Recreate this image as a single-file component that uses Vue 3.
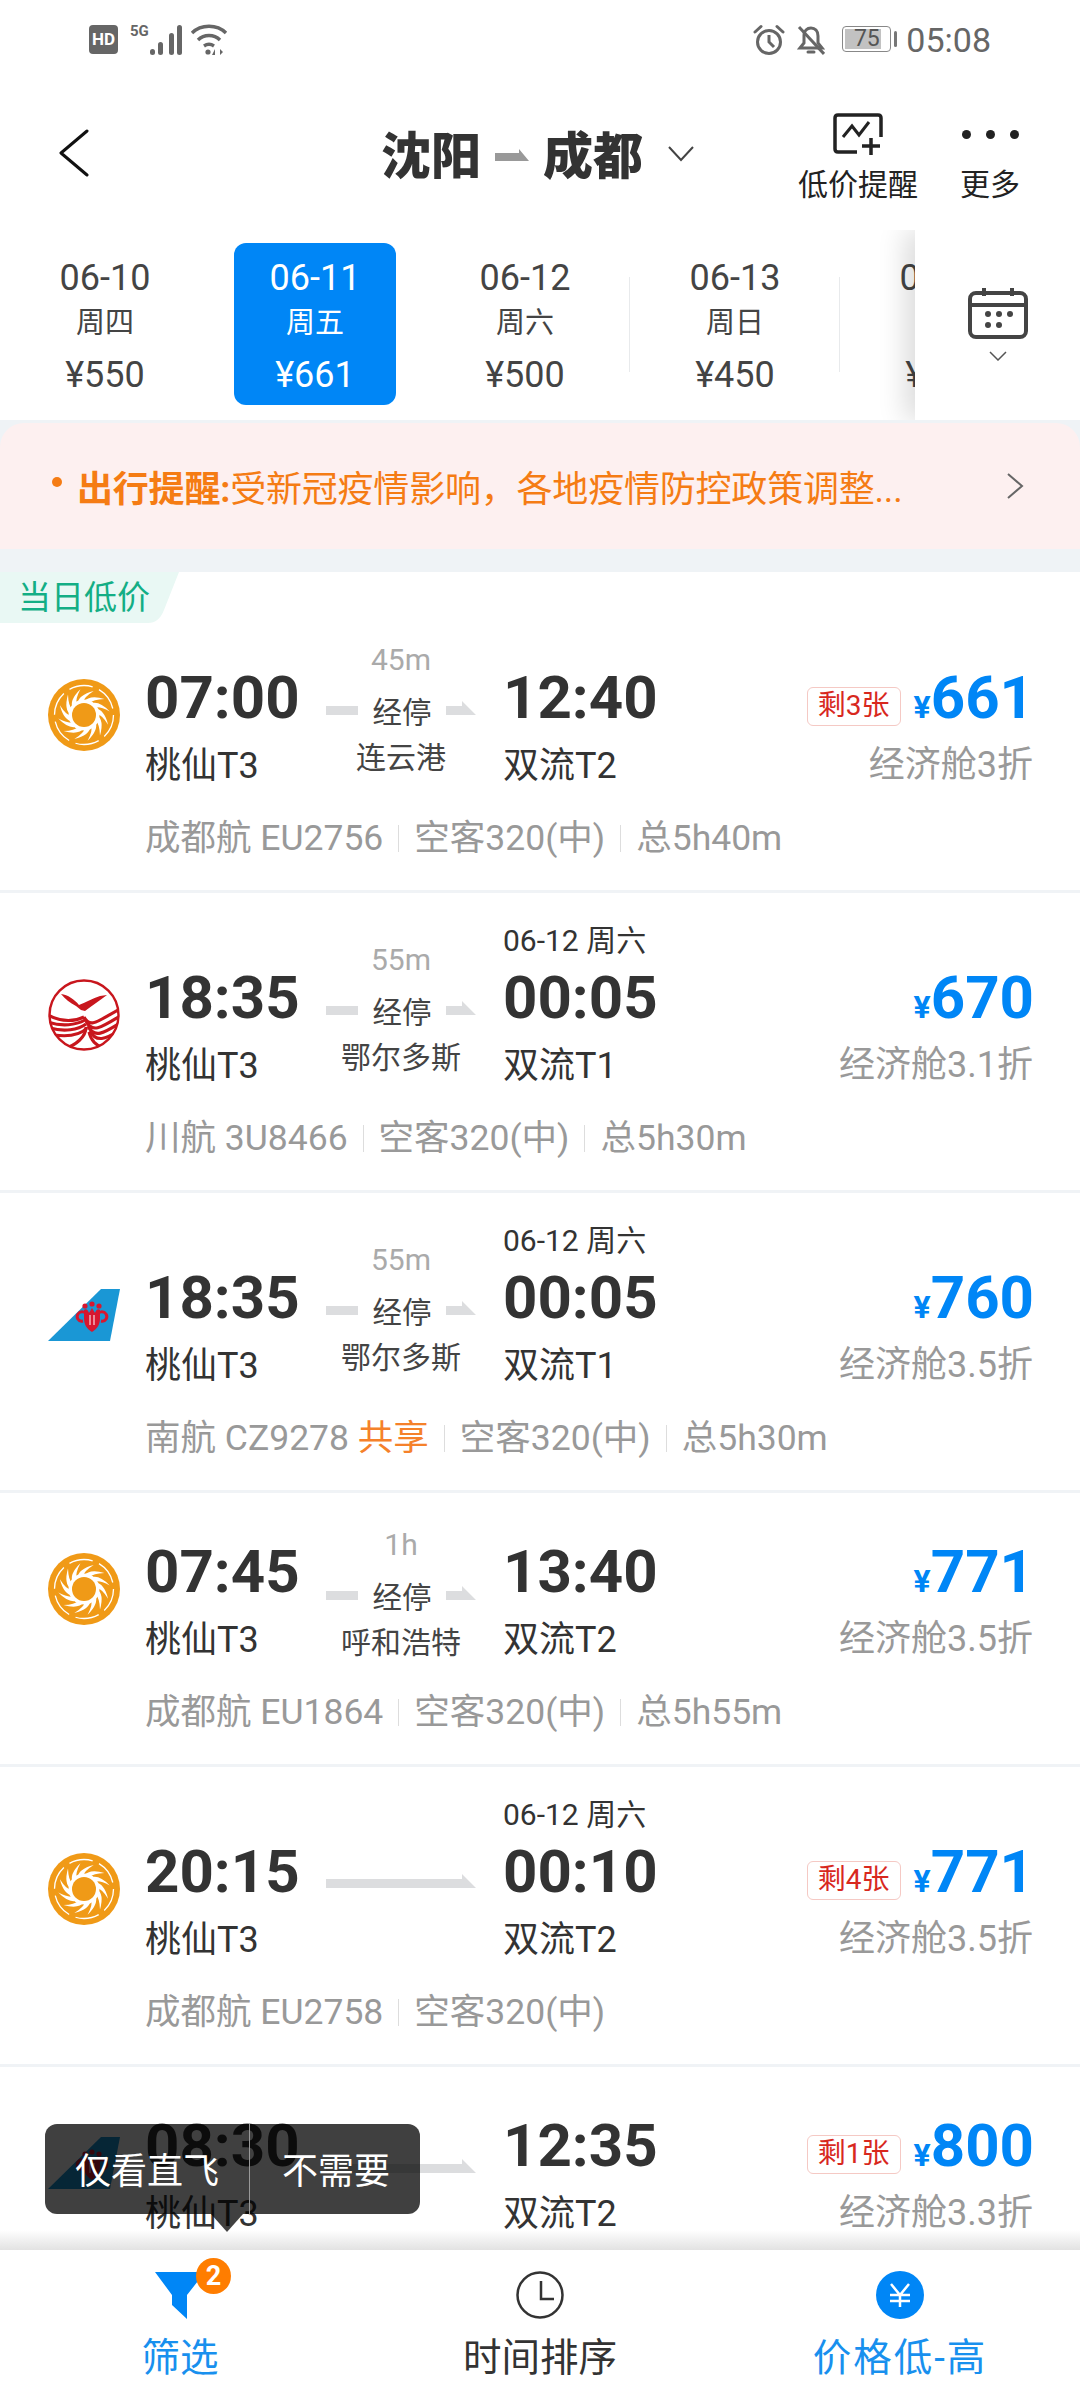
<template>
  <div class="page">
    <div class="status">
      <span class="hd">HD</span>
      <span class="five-g">5G</span>
      <svg class="signal" width="34" height="32" viewBox="0 0 34 32" fill="#666">
        <rect x="1" y="25" width="5" height="6" rx="2.5" />
        <rect x="9" y="18" width="5" height="13" rx="2.5" />
        <rect x="20" y="9" width="5" height="22" rx="2.5" />
        <rect x="28" y="1" width="5" height="30" rx="2.5" />
      </svg>
      <svg class="wifi" width="38" height="32" viewBox="0 0 38 32" fill="none" stroke="#666" stroke-width="3.4">
        <path d="M2 9C11 0 27 0 36 9" />
        <path d="M8 16C14 10 24 10 30 16" />
        <path d="M14 22C17 20 21 20 24 22" />
        <circle cx="18" cy="28" r="2.6" fill="#666" stroke="none" />
        <path d="M25 31V25L22 31ZM30 31V25L33 28Z" fill="#666" stroke="none" />
      </svg>
      <div class="status-right">
        <svg width="32" height="32" viewBox="0 0 32 32" fill="none" stroke="#666" stroke-width="3">
          <circle cx="16" cy="18" r="11.5" />
          <path d="M16 11V18L21 23" />
          <path d="M2 8L8 2.500M30 8L24 2.500" stroke-linecap="round" />
        </svg>
        <svg class="bell" width="28" height="32" viewBox="0 0 28 32" fill="none" stroke="#666" stroke-width="3">
          <path d="M7 11C7 7 10 4 14 4C18 4 21 7 21 12V19L25 24H3L7 19Z" />
          <path d="M11 28H17" stroke-linecap="round" />
          <path d="M2 3L27 30" />
        </svg>
        <div class="battery">
          <span class="battery-box"><i class="battery-fill"></i><b>75</b></span>
          <i class="battery-nub"></i>
        </div>
        <span class="clock">05:08</span>
      </div>
    </div>

    <header class="header">
      <svg class="back" width="32" height="48" viewBox="0 0 32 48" fill="none" stroke="#111" stroke-width="3">
        <path d="M29 2L3 24L29 46" stroke-linecap="round" stroke-linejoin="round" />
      </svg>
      <div class="route">
        <span>沈阳</span>
        <svg class="route-arrow" width="34" height="12" viewBox="0 0 34 12" fill="#999">
          <path d="M0 4H24V0L34 12H0Z" />
        </svg>
        <span>成都</span>
        <svg class="route-down" width="28" height="17" viewBox="0 0 28 17" fill="none" stroke="#444" stroke-width="2">
          <path d="M2 2L14 15L26 2" />
        </svg>
      </div>
      <div class="actions">
        <div class="action">
          <svg width="50" height="42" viewBox="0 0 50 42" fill="none" stroke="#222" stroke-width="3.5">
            <path d="M24 39H5C3 39 2 38 2 36V5C2 3 3 2 5 2H45C47 2 48 3 48 5V24" />
            <path d="M10 24L19 13L26 22L36 9" stroke-width="3" />
            <path d="M38 25V42M29 33H47" />
          </svg>
          <span>低价提醒</span>
        </div>
        <div class="action">
          <div class="dots"><i></i><i></i><i></i></div>
          <span>更多</span>
        </div>
      </div>
    </header>

    <div class="dates">
      <div class="date-list">
        <div v-for="d in dates" :key="d.day" class="date-item" :class="{ sep: d.sep }">
          <div class="date-pill" :class="{ active: d.active }">
            <span class="date-day">{{ d.day }}</span>
            <span class="date-week">{{ d.week }}</span>
            <span class="date-price">{{ d.price }}</span>
          </div>
        </div>
      </div>
      <div class="calendar">
        <svg width="60" height="52" viewBox="0 0 60 52" fill="none" stroke="#444" stroke-width="4">
          <rect x="2" y="6" width="56" height="44" rx="6" />
          <path d="M2 18H58" />
          <path d="M16 1V9M44 1V9" />
          <g fill="#444" stroke="none">
            <circle cx="20" cy="27" r="3" /><circle cx="31" cy="27" r="3" /><circle cx="42" cy="27" r="3" />
            <circle cx="20" cy="38" r="3" /><circle cx="31" cy="38" r="3" />
          </g>
        </svg>
        <svg class="calendar-down" width="18" height="10" viewBox="0 0 18 10" fill="none" stroke="#555" stroke-width="1.500">
          <path d="M1 1L9 9L17 1" />
        </svg>
      </div>
    </div>

    <div class="notice-wrap">
      <div class="notice">
        <i class="notice-dot"></i>
        <p class="notice-text"><b>出行提醒:</b>受新冠疫情影响，各地疫情防控政策调整...</p>
        <svg width="18" height="26" viewBox="0 0 18 26" fill="none" stroke="#666" stroke-width="2">
          <path d="M2 1L16 13L2 25" />
        </svg>
      </div>
    </div>

    <div class="list">
      <div v-for="f in flights" :key="f.no" class="flight" :class="{ plain: f.plain }">
        <div v-if="f.lowest" class="lowest">当日低价</div>
        <div v-if="f.nextDay" class="next-day">{{ f.nextDay }}</div>
        <div class="main">
          <div class="logo">
            <svg v-if="f.logo === 'sun'" width="72" height="72" viewBox="0 0 72 72">
              <circle cx="36" cy="36" r="36" fill="#f09a17" />
              <circle cx="36" cy="36" r="29.500" fill="none" stroke="#fff" stroke-width="1.300" stroke-dasharray="24 6.900" />
              <circle cx="36" cy="36" r="15.500" fill="#fff" />
              <path v-for="(b, i) in blades" :key="i" :d="b" fill="#fff" />
              <circle cx="36" cy="36" r="12" fill="#f09a17" />
            </svg>
            <svg v-else-if="f.logo === 'bird'" width="72" height="72" viewBox="0 0 72 72">
              <defs>
                <clipPath id="bird-clip"><circle cx="36" cy="36" r="35" /></clipPath>
              </defs>
              <circle cx="36" cy="36" r="34.500" fill="#fff" stroke="#c8161d" stroke-width="2.400" />
              <path d="M13 15C20 16 26 20 31 26C37 24 45 19 52 17L59 16C52 21 44 27 37 32L33 31L28 27C22 24 17 20 13 15Z" fill="#c8161d" />
              <g clip-path="url(#bird-clip)" fill="none" stroke="#c8161d" stroke-width="3.100">
                <path d="M36 38C28 42 14 44 0 36" />
                <path d="M37 41C28 46 14 48 0 43" />
                <path d="M38 45C30 51 16 53 2 49" />
                <path d="M39 49C32 56 20 58 6 56" />
                <path d="M36 38C42 50 50 42 72 30" />
                <path d="M38 42C44 55 54 48 72 37" />
                <path d="M40 47C46 60 56 54 72 44" />
                <path d="M42 52C48 64 58 60 70 52" />
                <path d="M38 48C38 58 28 66 16 70" />
                <path d="M41 53C43 62 48 66 56 70" />
              </g>
            </svg>
            <svg v-else width="72" height="72" viewBox="0 0 72 72">
              <path d="M53 10H72L62 62H0Z" fill="#1a97d5" />
              <g fill="#d7172f">
                <circle cx="37" cy="27" r="2.600" /><circle cx="44" cy="25" r="2.600" /><circle cx="51" cy="27" r="2.600" />
                <path d="M36 31C38 29 40 31 41 34L44 29L47 34C48 31 50 29 52 31V39C52 46 49 50 44 53C39 50 36 46 36 39Z" />
              </g>
              <g fill="none" stroke="#d7172f" stroke-width="3">
                <path d="M35 42C30 43 28 38 30 35C32 32 37 32 41 36" />
                <path d="M53 42C58 43 60 38 58 35C56 32 51 32 47 36" />
              </g>
              <path d="M42 36V46M46 36V46" stroke="#fff" stroke-width="1" />
            </svg>
          </div>
          <div class="side">
            <div class="time">{{ f.dep }}</div>
            <div class="terminal">{{ f.from }}</div>
          </div>
          <div class="mid">
            <template v-if="f.stop">
              <div class="duration">{{ f.wait }}</div>
              <div class="stop-line">
                <i class="bar"></i>
                <span>经停</span>
                <svg width="30" height="14" viewBox="0 0 30 14" fill="#dcdddf"><path d="M0 5H16V0L30 14H0Z" /></svg>
              </div>
              <div class="city">{{ f.stop }}</div>
            </template>
            <svg v-else class="direct" width="150" height="14" viewBox="0 0 150 14" fill="#dcdddf">
              <path d="M0 5H136V0L150 14H0Z" />
            </svg>
          </div>
          <div class="side arrive">
            <div class="time">{{ f.arr }}</div>
            <div class="terminal">{{ f.to }}</div>
          </div>
          <div class="fare">
            <div class="price-line">
              <span v-if="f.left" class="left-tag">{{ f.left }}</span>
              <span class="price"><small>¥</small>{{ f.price }}</span>
            </div>
            <div class="cabin">{{ f.cabin }}</div>
          </div>
        </div>
        <div class="sub">
          <span>{{ f.no }}<em v-if="f.shared"> 共享</em></span>
          <i></i>
          <span>空客320(中)</span>
          <template v-if="f.total">
            <i></i>
            <span>{{ f.total }}</span>
          </template>
        </div>
      </div>
    </div>

    <div class="toast">
      <span class="toast-yes">仅看直飞</span>
      <span class="toast-no">不需要</span>
    </div>

    <nav class="tabs">
      <div class="tab blue">
        <div class="tab-icon">
          <svg width="50" height="48" viewBox="0 0 50 48" fill="#0086f6">
            <path d="M0 1H50L32 24V48L17 34V24Z" />
          </svg>
          <span class="badge">2</span>
        </div>
        <span>筛选</span>
      </div>
      <div class="tab">
        <div class="tab-icon">
          <svg width="48" height="48" viewBox="0 0 48 48" fill="none" stroke="#333" stroke-width="2.500">
            <circle cx="24" cy="24" r="22.500" />
            <path d="M25 10V28H38" />
          </svg>
        </div>
        <span>时间排序</span>
      </div>
      <div class="tab blue wide">
        <div class="tab-icon">
          <svg width="48" height="48" viewBox="0 0 48 48" fill="none">
            <circle cx="24" cy="24" r="24" fill="#0086f6" />
            <path d="M15 13L24 24L33 13M14 24H34M14 30H34M24 24V36" stroke="#fff" stroke-width="2.500" />
          </svg>
        </div>
        <span>价格低-高</span>
      </div>
    </nav>
  </div>
</template>

<script setup>
const dates = [
  { day: '06-10', week: '周四', price: '¥550' },
  { day: '06-11', week: '周五', price: '¥661', active: true },
  { day: '06-12', week: '周六', price: '¥500', sep: true },
  { day: '06-13', week: '周日', price: '¥450', sep: true },
  { day: '06-14', week: '周一', price: '¥500' }
]

const flights = [
  { logo: 'sun', lowest: true, dep: '07:00', from: '桃仙T3', arr: '12:40', to: '双流T2', wait: '45m', stop: '连云港', left: '剩3张', price: 661, cabin: '经济舱3折', no: '成都航 EU2756', total: '总5h40m' },
  { logo: 'bird', nextDay: '06-12 周六', dep: '18:35', from: '桃仙T3', arr: '00:05', to: '双流T1', wait: '55m', stop: '鄂尔多斯', price: 670, cabin: '经济舱3.1折', no: '川航 3U8466', total: '总5h30m' },
  { logo: 'tail', nextDay: '06-12 周六', dep: '18:35', from: '桃仙T3', arr: '00:05', to: '双流T1', wait: '55m', stop: '鄂尔多斯', price: 760, cabin: '经济舱3.5折', no: '南航 CZ9278', shared: true, total: '总5h30m' },
  { logo: 'sun', plain: true, dep: '07:45', from: '桃仙T3', arr: '13:40', to: '双流T2', wait: '1h', stop: '呼和浩特', price: 771, cabin: '经济舱3.5折', no: '成都航 EU1864', total: '总5h55m' },
  { logo: 'sun', nextDay: '06-12 周六', dep: '20:15', from: '桃仙T3', arr: '00:10', to: '双流T2', left: '剩4张', price: 771, cabin: '经济舱3.5折', no: '成都航 EU2758' },
  { logo: 'tail', plain: true, dep: '08:30', from: '桃仙T3', arr: '12:35', to: '双流T2', left: '剩1张', price: 800, cabin: '经济舱3.3折', no: '南航 CZ6000' }
]

// swirl of the sun logo, twelve curved blades round the centre
const polar = (r, deg) => {
  const a = (deg * Math.PI) / 180
  return `${(36 + r * Math.cos(a)).toFixed(1)} ${(36 + r * Math.sin(a)).toFixed(1)}`
}
const blades = Array.from({ length: 12 }, (_, i) => {
  const a = i * 30
  return `M${polar(13, a)}Q${polar(21, a + 14)} ${polar(26, a + 52)}Q${polar(18, a + 30)} ${polar(13, a + 26)}Z`
})
</script>

<style scoped>
.page {
  position: relative;
  width: 1080px;
  height: 2400px;
  overflow: hidden;
  display: flex;
  flex-direction: column;
  background: #fff;
  color: #333;
  font-family: Roboto, "Noto Sans CJK SC", sans-serif;
}

.status {
  height: 80px;
  flex-shrink: 0;
  display: flex;
  align-items: flex-start;
  padding: 24px 89px 0 89px;
  box-sizing: border-box;
}

.hd {
  width: 29px;
  height: 29px;
  margin-top: 1px;
  border-radius: 4px;
  background: #666;
  color: #fff;
  font-size: 17px;
  font-weight: 700;
  line-height: 29px;
  text-align: center;
}

.five-g {
  margin-left: 12px;
  font-size: 15px;
  font-weight: 700;
  line-height: 14px;
  color: #666;
}

.wifi {
  margin-left: 7px;
}

.status-right {
  margin-left: auto;
  display: flex;
  align-items: flex-start;
}

.bell {
  margin-left: 12px;
}

.battery {
  display: flex;
  align-items: center;
  margin-left: 17px;
  margin-top: 2px;
}

.battery-box {
  position: relative;
  width: 49px;
  height: 26px;
  box-sizing: border-box;
  border: 1.5px solid #888;
  border-radius: 4px;
  text-align: center;
  font-size: 23px;
  line-height: 23px;
  color: #555;
}

.battery-box b {
  position: relative;
  font-weight: 400;
}

.battery-fill {
  position: absolute;
  left: 2px;
  top: 2px;
  bottom: 2px;
  width: 36px;
  background: #c2c2c2;
}

.battery-nub {
  width: 3px;
  height: 16px;
  margin-left: 3px;
  border-radius: 2px;
  background: #777;
}

.clock {
  margin-left: 9px;
  font-size: 34px;
  line-height: 32px;
  color: #666;
}

.header {
  height: 150px;
  flex-shrink: 0;
  display: flex;
  align-items: flex-start;
}

.back {
  margin: 49px 0 0 58px;
}

.route {
  margin: 47px 0 0 291px;
  height: 60px;
  display: flex;
  align-items: center;
  font-size: 50px;
  font-weight: 900;
  line-height: 60px;
}

.route-arrow {
  margin: -5px 14px 0;
}

.route-down {
  margin: -8px 0 0 24px;
}

.actions {
  margin: 33px 60px 0 auto;
  display: flex;
  gap: 42px;
}

.action {
  display: flex;
  flex-direction: column;
  align-items: center;
  font-size: 30px;
  line-height: 40px;
  color: #222;
}

.action span {
  margin-top: 10px;
}

.dots {
  height: 42px;
  display: flex;
  align-items: center;
  gap: 15px;
}

.dots i {
  width: 9px;
  height: 9px;
  border-radius: 50%;
  background: #222;
}

.dates {
  height: 190px;
  flex-shrink: 0;
  display: flex;
  overflow: hidden;
}

.date-list {
  flex: 1;
  min-width: 0;
  display: flex;
  overflow: hidden;
}

.date-item {
  position: relative;
  flex: 0 0 210px;
  display: flex;
  justify-content: center;
  padding-top: 13px;
}

.date-item.sep::after {
  content: "";
  position: absolute;
  right: 0;
  top: 47px;
  height: 95px;
  width: 1px;
  background: #e8eaec;
}

.date-pill {
  width: 162px;
  height: 162px;
  box-sizing: border-box;
  padding-top: 15px;
  display: flex;
  flex-direction: column;
  align-items: center;
  border-radius: 12px;
  color: #444;
}

.date-pill.active {
  background: #0086f6;
  color: #fff;
}

.date-day {
  font-size: 36px;
  line-height: 40px;
}

.date-week {
  margin-top: 7px;
  font-size: 29px;
  line-height: 36px;
}

.date-price {
  margin-top: 14px;
  font-size: 36px;
  line-height: 40px;
}

.calendar {
  position: relative;
  width: 165px;
  flex-shrink: 0;
  display: flex;
  flex-direction: column;
  align-items: center;
  padding-top: 57px;
  box-sizing: border-box;
  background: #fff;
  box-shadow: -10px 0 26px rgba(0, 0, 0, 0.14);
}

.calendar-down {
  margin-top: 12px;
}

.notice-wrap {
  height: 152px;
  flex-shrink: 0;
  padding-top: 3px;
  box-sizing: border-box;
  background: #eff3f6;
}

.notice {
  height: 126px;
  display: flex;
  align-items: center;
  padding: 0 56px 0 52px;
  border-radius: 24px 24px 0 0;
  background: #fdf0f0;
}

.notice-dot {
  width: 10px;
  height: 10px;
  margin-top: -8px;
  border-radius: 50%;
  background: #f57c14;
}

.notice-text {
  margin: 7px 0 0 15px;
  flex: 1;
  font-size: 36px;
  letter-spacing: -0.2px;
  line-height: 44px;
  white-space: nowrap;
  color: #f57c14;
}

.list {
  flex: 1;
  min-height: 0;
  overflow: hidden;
  background: #f0f3f6;
}

.flight {
  margin-bottom: 3px;
  padding-bottom: 34px;
  background: #fff;
}

.lowest {
  width: 179px;
  height: 51px;
  padding-left: 18px;
  box-sizing: border-box;
  margin-bottom: 50px;
  background: #e9f8f4;
  clip-path: path("M0 0H179L164 38Q159 51 148 51H0Z");
  font-size: 33px;
  line-height: 51px;
  color: #14ae85;
}

.next-day {
  margin: 0 0 19px 503px;
  padding-top: 35px;
  font-size: 30px;
  line-height: 26px;
}

.flight.plain {
  padding-top: 54px;
}

.main {
  height: 111px;
  display: flex;
  align-items: flex-start;
}

.logo {
  width: 72px;
  height: 72px;
  margin: 6px 0 0 48px;
  flex-shrink: 0;
}

.side {
  width: 181px;
  margin-left: 25px;
  flex-shrink: 0;
}

.side.arrive {
  width: 181px;
  margin-left: 27px;
}

.time {
  font-size: 60px;
  font-weight: 700;
  line-height: 50px;
}

.terminal {
  margin-top: 25px;
  font-size: 36px;
  line-height: 36px;
}

.mid {
  width: 150px;
  flex-shrink: 0;
  margin-top: -28px;
  text-align: center;
}

.flight.plain .mid {
  margin-top: -17px;
}

.duration {
  font-size: 30px;
  line-height: 30px;
  color: #aaa;
}

.stop-line {
  margin-top: 20px;
  height: 36px;
  display: flex;
  align-items: center;
  justify-content: space-between;
  font-size: 29.5px;
  line-height: 36px;
  color: #444;
}

.stop-line .bar {
  width: 32px;
  height: 9px;
  margin-top: -5px;
  background: #dcdddf;
}

.stop-line svg {
  margin-top: -10px;
}

.city {
  margin-top: 9px;
  font-size: 30px;
  line-height: 36px;
  white-space: nowrap;
  color: #444;
}

.direct {
  display: block;
  margin-top: 55px;
}

.fare {
  flex: 1;
  min-width: 0;
  padding-right: 46px;
  text-align: right;
}

.price-line {
  height: 50px;
  display: flex;
  align-items: center;
  justify-content: flex-end;
}

.left-tag {
  height: 39px;
  margin: 16px 13px 0 0;
  padding: 0 10px;
  box-sizing: border-box;
  border: 1px solid #f5c9c4;
  border-radius: 6px;
  font-size: 28px;
  line-height: 36px;
  white-space: nowrap;
  color: #d8281e;
}

.price {
  margin-top: 8px;
  font-size: 60px;
  font-weight: 700;
  line-height: 50px;
  color: #0086f6;
}

.price small {
  font-size: 32px;
}

.cabin {
  margin: 24px 1px 0 0;
  font-size: 36px;
  line-height: 36px;
  color: #999;
  white-space: nowrap;
}

.sub {
  margin: 36px 0 0 145px;
  height: 36px;
  display: flex;
  align-items: center;
  font-size: 35.5px;
  line-height: 36px;
  color: #999;
}

.sub i {
  width: 1px;
  height: 27px;
  margin: 0 15px;
  background: #ddd;
}

.sub em {
  font-style: normal;
  color: #f5812a;
}

.toast {
  position: absolute;
  left: 45px;
  top: 2124px;
  width: 375px;
  height: 90px;
  display: flex;
  border-radius: 12px;
  background: rgba(0, 0, 0, 0.75);
  font-size: 36px;
  line-height: 97px;
  color: #fff;
}

.toast::after {
  content: "";
  position: absolute;
  left: 166px;
  top: 90px;
  border-left: 16px solid transparent;
  border-right: 16px solid transparent;
  border-top: 18px solid rgba(0, 0, 0, 0.75);
}

.toast-yes {
  width: 205px;
  padding-left: 30px;
  box-sizing: border-box;
  border-right: 1px solid #999;
}

.toast-no {
  padding-left: 32px;
}

.tabs {
  position: relative;
  height: 150px;
  flex-shrink: 0;
  display: grid;
  grid-template-columns: repeat(3, 1fr);
  background: #fff;
}

.tabs::before {
  content: "";
  position: absolute;
  left: 0;
  right: 0;
  top: -20px;
  height: 20px;
  background: linear-gradient(rgba(226, 226, 226, 0), #e2e2e2);
}

.tab {
  display: flex;
  flex-direction: column;
  align-items: center;
  padding-top: 21px;
  font-size: 38.5px;
  line-height: 45px;
  color: #333;
}

.tab.blue {
  color: #1890ee;
}

.tab.wide {
  letter-spacing: 2px;
}

.tab-icon {
  position: relative;
  height: 48px;
  margin-bottom: 16px;
}

.tab-icon svg {
  display: block;
}

.badge {
  position: absolute;
  left: 41px;
  top: -13px;
  width: 35px;
  height: 36px;
  border-radius: 50%;
  background: #ff7d00;
  font-size: 27px;
  font-weight: 700;
  line-height: 36px;
  text-align: center;
  color: #fff;
}
</style>

<style>
body {
  margin: 0;
}
</style>
